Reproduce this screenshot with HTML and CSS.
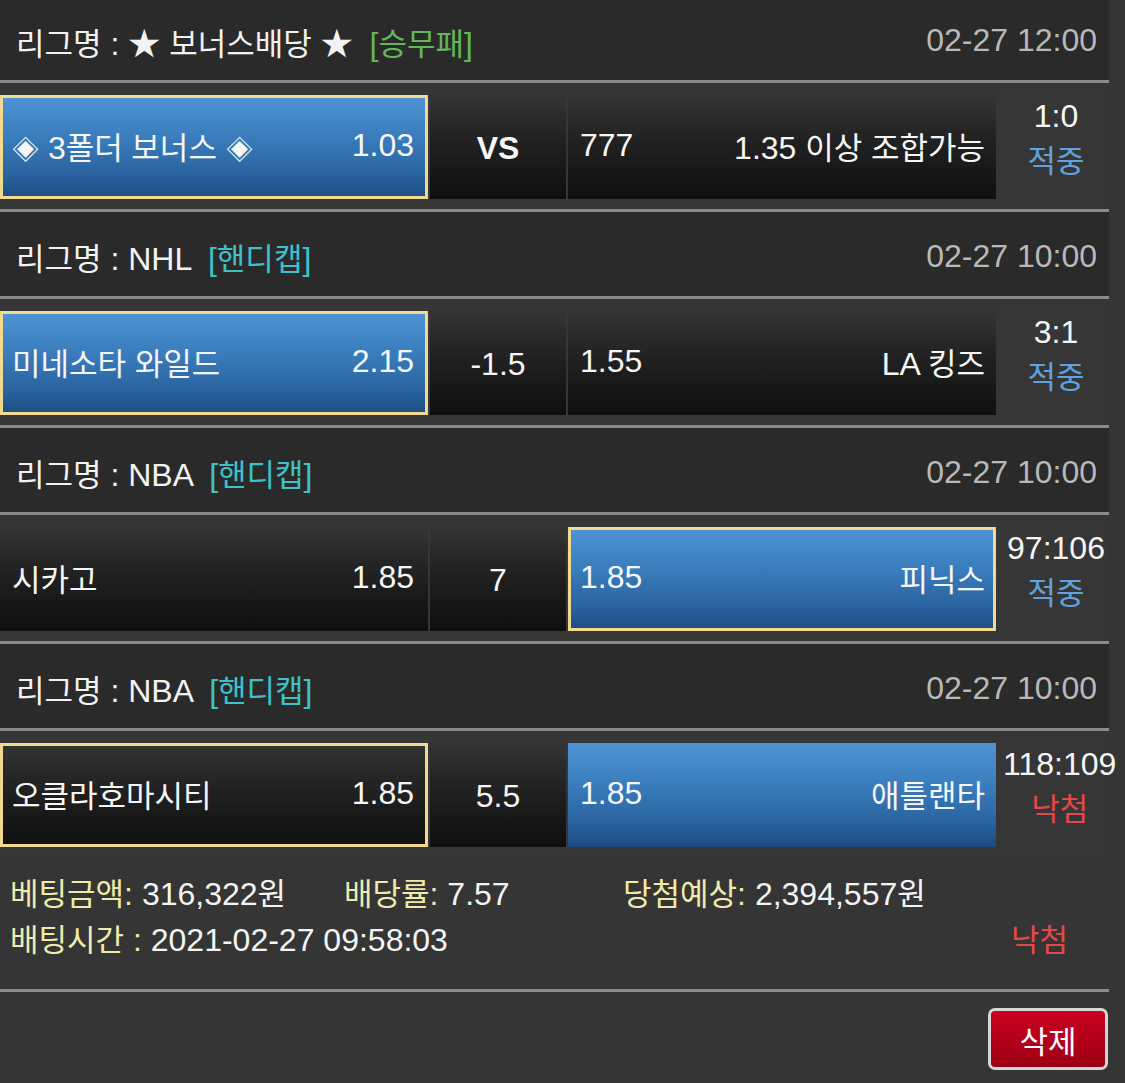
FILE: index.html
```html
<!DOCTYPE html>
<html lang="ko">
<head>
<meta charset="utf-8">
<title>베팅내역</title>
<link rel="stylesheet" href="styles.css">
</head>
<body>
<div class="board">
  <div class="league first">
    <div class="lg"><span class="k">리그명</span> : ★ <span class="k">보너스배당</span> ★ <span class="tag green">[<span class="k">승무패</span>]</span></div>
    <div class="date">02-27 12:00</div>
  </div>
  <div class="match">
    <div class="cell home blue sel"><span><span class="dia">◈</span> 3<span class="k">폴더 보너스</span> <span class="dia">◈</span></span><span>1.03</span></div>
    <div class="cell mid dark"><b class="vs">VS</b></div>
    <div class="cell away dark"><span>777</span><span>1.35 <span class="k">이상 조합가능</span></span></div>
    <div class="result"><div>1:0</div><div class="k hit">적중</div></div>
  </div>

  <div class="league">
    <div class="lg"><span class="k">리그명</span> : NHL <span class="tag cyan">[<span class="k">핸디캡</span>]</span></div>
    <div class="date">02-27 10:00</div>
  </div>
  <div class="match">
    <div class="cell home blue sel"><span class="k">미네소타 와일드</span><span>2.15</span></div>
    <div class="cell mid dark"><span>-1.5</span></div>
    <div class="cell away dark"><span>1.55</span><span>LA <span class="k">킹즈</span></span></div>
    <div class="result"><div>3:1</div><div class="k hit">적중</div></div>
  </div>

  <div class="league">
    <div class="lg"><span class="k">리그명</span> : NBA <span class="tag cyan">[<span class="k">핸디캡</span>]</span></div>
    <div class="date">02-27 10:00</div>
  </div>
  <div class="match">
    <div class="cell home dark"><span class="k">시카고</span><span>1.85</span></div>
    <div class="cell mid dark"><span>7</span></div>
    <div class="cell away blue sel"><span>1.85</span><span class="k">피닉스</span></div>
    <div class="result"><div>97:106</div><div class="k hit">적중</div></div>
  </div>

  <div class="league">
    <div class="lg"><span class="k">리그명</span> : NBA <span class="tag cyan">[<span class="k">핸디캡</span>]</span></div>
    <div class="date">02-27 10:00</div>
  </div>
  <div class="match last">
    <div class="cell home dark sel"><span class="k">오클라호마시티</span><span>1.85</span></div>
    <div class="cell mid dark"><span>5.5</span></div>
    <div class="cell away blue"><span>1.85</span><span class="k">애틀랜타</span></div>
    <div class="result"><div>118:109</div><div class="k miss">낙첨</div></div>
  </div>

  <div class="summary">
    <div class="sum-row">
      <div class="item w1"><span class="lbl"><span class="k">베팅금액</span>:</span> 316,322<span class="k">원</span></div>
      <div class="item w2"><span class="lbl"><span class="k">배당률</span>:</span> 7.57</div>
      <div class="item"><span class="lbl"><span class="k">당첨예상</span>:</span> 2,394,557<span class="k">원</span></div>
    </div>
    <div class="sum-row">
      <div class="item"><span class="lbl"><span class="k">배팅시간</span> :</span> 2021-02-27 09:58:03</div>
      <div class="k miss status">낙첨</div>
    </div>
  </div>

  <div class="actions">
    <button class="del k" type="button">삭제</button>
  </div>
</div>
</body>
</html>
```

FILE: styles.css
```css
* { box-sizing: border-box; }

html, body {
  margin: 0;
  padding: 0;
}

body {
  background: #353535;
  color: #f4f4f4;
  font-family: "Liberation Sans", "Noto Sans CJK KR", sans-serif;
  font-size: 32px;
  width: 1125px;
  height: 1083px;
  overflow: hidden;
}

.k {
  font-size: 31px;
  letter-spacing: 0;
}

.dia {
  font-size: 27px;
}

.board {
  width: 1109px;
}

.league {
  height: 87px;
  padding: 5px 12px 0 16px;
  background: #2a2a2a;
  border-bottom: 3px solid #8a8a8a;
  display: flex;
  align-items: center;
  justify-content: space-between;
}

.league.first {
  height: 83px;
  padding-top: 1px;
}

.lg {
  color: #f2f2f2;
  white-space: nowrap;
}

.tag { margin-left: 8px; }
.tag.green { color: #62b858; }
.tag.cyan { color: #3fc1c9; }

.date {
  color: #b9b9b9;
}

.match {
  height: 129px;
  padding: 12px 0 10px 0;
  border-bottom: 3px solid #8a8a8a;
  display: grid;
  grid-template-columns: 428px 136px 428px 1fr;
  column-gap: 2px;
  background: #363636;
}

.match.last {
  height: 126px;
  border-bottom: none;
}

.cell {
  height: 104px;
  border: 3px solid transparent;
  background-origin: border-box;
  display: flex;
  align-items: center;
  justify-content: space-between;
  color: #f6f6f6;
  white-space: nowrap;
  padding-bottom: 3px;
}

.cell.home { padding-left: 9px; padding-right: 11px; }
.cell.away { padding-left: 9px; padding-right: 8px; }
.cell.mid { justify-content: center; padding-top: 3px; padding-bottom: 0; }

.vs {
  font-weight: bold;
  font-size: 32px;
}

.blue {
  background-image: linear-gradient(#4f94d5 0%, #3a7dbd 40%, #2a64a0 75%, #1c4b7f 100%);
}

.dark {
  background-image: linear-gradient(#343434 0%, #232323 40%, #171717 75%, #0f0f0f 100%);
}

.cell.sel {
  border-color: #f2d991;
}

.result {
  margin-top: -2px;
  padding-left: 5px;
  text-align: center;
  line-height: 46px;
  white-space: nowrap;
  color: #f6f6f6;
}

.hit { color: #5ea3df; }
.miss { color: #e24a4a; }

.summary {
  height: 135px;
  padding: 11px 0 0 10px;
  border-bottom: 3px solid #8a8a8a;
  background: #353535;
}

.sum-row {
  display: flex;
  align-items: center;
  height: 46px;
  white-space: nowrap;
}

.item.w1 { width: 334px; }
.item.w2 { width: 279px; }

.lbl { color: #f1ebab; }

.status {
  margin-left: auto;
  margin-right: 41px;
}

.actions {
  display: flex;
  justify-content: flex-end;
  padding: 16px 1px 0 0;
}

.del {
  width: 120px;
  height: 62px;
  border: 3px solid #d6d6d6;
  border-radius: 7px;
  background: linear-gradient(#c9001f, #b00019 60%, #9c0014);
  color: #ffffff;
  font-family: "Liberation Sans", "Noto Sans CJK KR", sans-serif;
  padding: 0;
  cursor: pointer;
}
```
